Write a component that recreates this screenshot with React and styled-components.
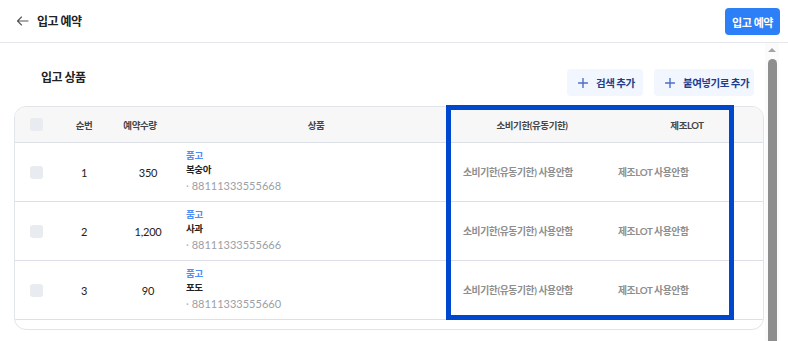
import styled, { createGlobalStyle } from "styled-components";

const GlobalStyle = createGlobalStyle`
  html, body {
    margin: 0;
    padding: 0;
    background: #ffffff;
    font-family: Lato, "Noto Sans CJK KR", sans-serif;
    color: #222;
  }
  * { box-sizing: border-box; }
`;

const COLUMNS = "35px 68px 68px 260px 172px 1fr";

const rows = [
  { seq: 1, qty: "350", name: "복숭아", code: "88111333555668" },
  { seq: 2, qty: "1,200", name: "사과", code: "88111333555666" },
  { seq: 3, qty: "90", name: "포도", code: "88111333555660" },
];

export default function App() {
  return (
    <Page>
      <GlobalStyle />
      <Header>
        <HeaderLeft>
          <BackIcon width="13" height="10" viewBox="0 0 13 10">
            <path d="M12 5H1.5M5.5 1L1.5 5l4 4" fill="none" stroke="#555" strokeWidth="1.1" strokeLinecap="round" strokeLinejoin="round" />
          </BackIcon>
          <PageTitle>입고 예약</PageTitle>
        </HeaderLeft>
        <PrimaryButton>입고 예약</PrimaryButton>
      </Header>

      <Body>
        <Main>
          <SectionHead>
            <SectionTitle>입고 상품</SectionTitle>
            <Actions>
              <GhostButton $w={76}>
                <PlusIcon />
                검색 추가
              </GhostButton>
              <GhostButton $w={100}>
                <PlusIcon />
                붙여넣기로 추가
              </GhostButton>
            </Actions>
          </SectionHead>

          <TableWrap>
            <Table>
              <HeadRow>
                <Cell $align="flex-start" $pad="0 0 0 15px">
                  <Check />
                </Cell>
                <HeadCell>순번</HeadCell>
                <HeadCell $pad="0 24px 0 0">예약수량</HeadCell>
                <HeadCell>상품</HeadCell>
                <HeadCell $pad="0 17px">소비기한(유동기한)</HeadCell>
                <HeadCell $pad="0 7px 0 0">제조LOT</HeadCell>
              </HeadRow>
              {rows.map((r) => (
                <BodyRow key={r.seq}>
                  <Cell $align="flex-start" $pad="0 0 0 15px">
                    <Check />
                  </Cell>
                  <Cell>
                    <Num>{r.seq}</Num>
                  </Cell>
                  <Cell $pad="0 8px 0 0">
                    <Num>{r.qty}</Num>
                  </Cell>
                  <Product>
                    <Tag>품고</Tag>
                    <ProductName>{r.name}</ProductName>
                    <Code>
                      <Dot>·</Dot> {r.code}
                    </Code>
                  </Product>
                  <Cell $align="flex-start" $pad="0 17px">
                    <Muted>소비기한(유동기한) 사용안함</Muted>
                  </Cell>
                  <Cell $align="flex-start">
                    <Muted>제조LOT 사용안함</Muted>
                  </Cell>
                </BodyRow>
              ))}
              <TableFoot />
            </Table>
            <Highlight />
          </TableWrap>
        </Main>

        <ScrollTrack>
          <ScrollArrow />
          <ScrollThumb />
        </ScrollTrack>
        <RightGap />
      </Body>
    </Page>
  );
}

function PlusIcon() {
  return (
    <svg width="10" height="10" viewBox="0 0 10 10">
      <path d="M5 0.5v9M0.5 5h9" stroke="#4d6fc9" strokeWidth="1.4" strokeLinecap="round" />
    </svg>
  );
}

const Page = styled.div`
  width: 100%;
  height: 100vh;
  overflow: hidden;
  background: #fff;
`;

const Header = styled.header`
  height: 43px;
  display: flex;
  align-items: center;
  justify-content: space-between;
  padding: 0 8px 1px 16px;
  border-bottom: 1px solid #e7e8eb;
`;

const HeaderLeft = styled.div`
  display: flex;
  align-items: center;
  gap: 8px;
`;

const BackIcon = styled.svg`
  display: block;
  margin-top: 1px;
`;

const PageTitle = styled.h1`
  margin: 0;
  font-size: 12px;
  font-weight: 700;
  letter-spacing: -0.5px;
  color: #222;
`;

const PrimaryButton = styled.button`
  height: 27px;
  width: 55px;
  margin-top: 2px;
  border: none;
  border-radius: 4px;
  background: #2d7ff7;
  color: #fff;
  font-family: inherit;
  font-size: 11px;
  font-weight: 700;
  letter-spacing: -0.4px;
  padding: 0;
`;

const Body = styled.div`
  display: flex;
  height: calc(100vh - 43px);
`;

const Main = styled.main`
  flex: 1;
  padding: 0 1px 0 14px;
`;

const SectionHead = styled.div`
  display: flex;
  justify-content: space-between;
  align-items: flex-start;
  padding: 26px 10px 10px 27px;
`;

const SectionTitle = styled.h2`
  margin: 0;
  padding-top: 1px;
  font-size: 12px;
  font-weight: 700;
  letter-spacing: -0.5px;
  line-height: 16px;
  color: #222;
`;

const Actions = styled.div`
  display: flex;
  gap: 11px;
`;

const GhostButton = styled.button`
  width: ${(p) => p.$w}px;
  height: 27px;
  display: flex;
  align-items: center;
  gap: 8px;
  padding: 0 0 0 11px;
  border: none;
  border-radius: 4px;
  background: #f1f6ff;
  color: #1f3d8c;
  font-family: inherit;
  font-size: 10.5px;
  font-weight: 700;
  letter-spacing: -0.5px;
  white-space: nowrap;
`;

const TableWrap = styled.div`
  position: relative;
`;

const Table = styled.div`
  border: 1px solid #e1e4e9;
  border-radius: 12px;
  overflow: hidden;
  background: #fff;
`;

const HeadRow = styled.div`
  display: grid;
  grid-template-columns: ${COLUMNS};
  height: 36px;
  background: #f7f7f8;
  border-bottom: 1px solid #dde1e7;
`;

const BodyRow = styled.div`
  display: grid;
  grid-template-columns: ${COLUMNS};
  height: 59px;
  border-bottom: 1px solid #dde1e7;
`;

const TableFoot = styled.div`
  height: 9px;
`;

const Cell = styled.div`
  display: flex;
  align-items: center;
  justify-content: ${(p) => p.$align || "center"};
  padding: ${(p) => p.$pad || "0"};
  min-width: 0;
`;

const HeadCell = styled(Cell)`
  font-size: 9.5px;
  font-weight: 700;
  letter-spacing: -0.4px;
  color: #454545;
`;

const Check = styled.span`
  width: 13px;
  height: 13px;
  border-radius: 3px;
  background: #e8ebef;
`;

const Num = styled.span`
  font-size: 11px;
  color: #222;
  letter-spacing: -0.2px;
`;

const Product = styled.div`
  display: flex;
  flex-direction: column;
  justify-content: center;
  padding-bottom: 1px;
`;

const Tag = styled.span`
  font-size: 9.5px;
  line-height: 14px;
  font-weight: 700;
  letter-spacing: -0.3px;
  color: #4f8ef5;
`;

const ProductName = styled.span`
  font-size: 9.5px;
  line-height: 14px;
  font-weight: 700;
  letter-spacing: -0.4px;
  color: #222;
`;

const Code = styled.span`
  margin-top: 1px;
  font-size: 11px;
  line-height: 16px;
  color: #9ba0a8;
  letter-spacing: 0;
`;

const Dot = styled.span`
  color: #b3b7bd;
`;

const Muted = styled.span`
  font-size: 9.8px;
  font-weight: 700;
  letter-spacing: -0.4px;
  color: #8e8e8e;
  white-space: nowrap;
`;

const Highlight = styled.div`
  position: absolute;
  left: 432px;
  top: -1px;
  width: 288px;
  height: 215px;
  border: 5px solid #0047cf;
  pointer-events: none;
`;

const ScrollTrack = styled.div`
  width: 14px;
  display: flex;
  flex-direction: column;
  align-items: center;
  background: #fbfbfb;
  padding-top: 5px;
`;

const ScrollArrow = styled.span`
  width: 0;
  height: 0;
  border-left: 4px solid transparent;
  border-right: 4px solid transparent;
  border-bottom: 4px solid #a3a3a3;
`;

const ScrollThumb = styled.span`
  margin-top: 7px;
  width: 9px;
  flex: 1;
  border-radius: 5px 5px 0 0;
  background: #8e8e8e;
`;

const RightGap = styled.div`
  width: 9px;
`;
